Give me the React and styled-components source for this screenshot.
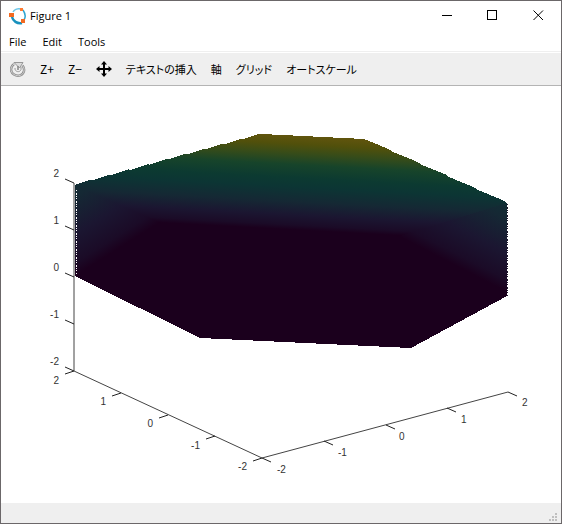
import styled, { createGlobalStyle } from 'styled-components'

const MENUS = ['File', 'Edit', 'Tools']
const TOOLS = ['テキストの挿入', '軸', 'グリッド', 'オートスケール']

// each axis: line, label alignment and its ticks
const AXES = [
	{
		id: 'z',
		line: [73, 97, 73, 285],
		anchor: 'end',
		ticks: [
			{ label: '2', x: 73, y: 97, dx: -9, dy: -4, tx: 58, ty: 91 },
			{ label: '1', x: 73, y: 144, dx: -9, dy: -4, tx: 58, ty: 138 },
			{ label: '0', x: 73, y: 191, dx: -9, dy: -4, tx: 58, ty: 185 },
			{ label: '-1', x: 73, y: 238, dx: -9, dy: -4, tx: 58, ty: 232 },
			{ label: '-2', x: 73, y: 285, dx: -9, dy: -4, tx: 58, ty: 279 },
		],
	},
	{
		id: 'y',
		line: [73, 285, 261, 372],
		anchor: 'end',
		ticks: [
			{ label: '2', x: 73, y: 285, dx: -9, dy: 3, tx: 58, ty: 298 },
			{ label: '1', x: 120, y: 307, dx: -9, dy: 3, tx: 105, ty: 319 },
			{ label: '0', x: 167, y: 329, dx: -9, dy: 3, tx: 152, ty: 341 },
			{ label: '-1', x: 214, y: 350, dx: -9, dy: 3, tx: 199, ty: 363 },
			{ label: '-2', x: 261, y: 372, dx: -9, dy: 3, tx: 246, ty: 384 },
		],
	},
	{
		id: 'x',
		line: [261, 372, 507, 306],
		anchor: 'start',
		ticks: [
			{ label: '-2', x: 261, y: 372, dx: 9, dy: 4, tx: 276, ty: 387 },
			{ label: '-1', x: 323, y: 355, dx: 9, dy: 4, tx: 337, ty: 370 },
			{ label: '0', x: 385, y: 339, dx: 9, dy: 4, tx: 398, ty: 354 },
			{ label: '1', x: 446, y: 322, dx: 9, dy: 4, tx: 460, ty: 337 },
			{ label: '2', x: 507, y: 306, dx: 9, dy: 4, tx: 521, ty: 320 },
		],
	},
]

// value -> colour, 0 is the flat bottom and 1 the top edge
const COLORMAP = [
	[0, '#1b001d'],
	[0.05, '#1b0b27'],
	[0.16, '#1b1631'],
	[0.3, '#152834'],
	[0.46, '#0c3534'],
	[0.56, '#0c3a31'],
	[0.7, '#17442a'],
	[0.82, '#374c19'],
	[0.92, '#51500b'],
	[1, '#5f540d'],
]

// edge with a small bump where two mesh cells meet
const bumpyEdge = (x1, y1, x2, y2, cells) => {
	const at = (t, lift) => `${x1 + (x2 - x1) * t},${y1 + (y2 - y1) * t - lift}`
	const points = [at(0, 0)]
	for (let i = 1; i <= cells; i++) {
		points.push(at((i - 0.15) / cells, 1), at(i / cells, 0))
	}
	return points.join(' ')
}

const OUTLINE = [
	bumpyEdge(74, 99, 261, 48, 10),
	bumpyEdge(363, 53, 506, 117, 5),
	'506,210 410,262 199,252 74,190',
].join(' ')

function Ramp({ id, from, to }) {
	return (
		<linearGradient
			id={id}
			gradientUnits="userSpaceOnUse"
			x1={from[0]}
			y1={from[1]}
			x2={to[0]}
			y2={to[1]}
		>
			{COLORMAP.map(([offset, color]) => (
				<stop key={offset} offset={offset} stopColor={color} />
			))}
		</linearGradient>
	)
}

function SurfacePlot() {
	return (
		<Plot viewBox="0 0 560 417" role="img" aria-label="Figure 1">
			<defs>
				<Ramp id="back" from={[261, 142]} to={[266, 49]} />
				<Ramp id="left" from={[74, 190]} to={[-44, 4]} />
				<Ramp id="right" from={[506, 206]} to={[605, 14]} />
			</defs>
			{AXES.map(({ id, line, anchor, ticks }) => (
				<g key={id}>
					<AxisLine x1={line[0]} y1={line[1]} x2={line[2]} y2={line[3]} />
					{ticks.map(({ label, x, y, dx, dy, tx, ty }) => (
						<g key={label}>
							<Tick x1={x} y1={y} x2={x + dx} y2={y + dy} />
							<TickLabel x={tx} y={ty} textAnchor={anchor}>
								{label}
							</TickLabel>
						</g>
					))}
				</g>
			))}
			<g shapeRendering="crispEdges">
				<polygon points={OUTLINE} fill="url(#back)" />
				<polygon points="74,99 159,137 74,190" fill="url(#left)" />
				<polygon points="506,117 399,150 506,206" fill="url(#right)" />
				<Fringe x1="75" y1="104" x2="75" y2="188" stroke="#fff" />
				<Fringe x1="506" y1="118" x2="506" y2="210" stroke="#1b1428" />
			</g>
		</Plot>
	)
}

function OctaveLogo() {
	return (
		<svg width="18" height="18" viewBox="0 0 18 18" fill="none">
			<path d="M4 5C5 3 8 1 12 2" stroke="#6cc6e8" strokeWidth="1.5" />
			<path d="M14 3c2 3 3 7 1 10" stroke="#2fa4cf" strokeWidth="1.5" />
			<path d="M3 10c1 4 5 7 10 6" stroke="#1991bd" strokeWidth="2.5" />
			<path d="M0 6h5v4H0z" fill="#f26a21" />
			<path d="M11 1h3v3h-3z" fill="#ff7a30" />
			<path d="M12 12h4v4h-4z" fill="#f26a21" />
		</svg>
	)
}

function RotateIcon() {
	return (
		<svg width="16" height="16" viewBox="0 0 16 16" fill="none">
			<path
				d="M4 3C0 6 0 11 4 13.500s9 1 10-3.500c.4-2-.3-4-1.500-5.500"
				stroke="#8f8f8f"
				strokeWidth="2.5"
			/>
			<path
				d="M4 3C0 6 0 11 4 13.500s9 1 10-3.500c.4-2-.3-4-1.500-5.500"
				stroke="#cfcfcf"
			/>
			<path d="M5 7c-.5 4 5 5 6 1.500V6" stroke="#989898" />
			<path d="M4 1.500h9L9.500 7z" fill="#dcdcdc" stroke="#979797" />
			<path d="M8 5v4" stroke="#858585" strokeWidth="1.5" />
		</svg>
	)
}

function PanIcon() {
	return (
		<svg width="16" height="16" viewBox="0 0 16 16">
			<path
				d="M8 0l3 3.500H9V7h3.500V5L16 8l-3.500 3V9H9v3.500h2L8 16l-3-3.500h2V9H3.500v2L0 8l3.500-3v2H7V3.500H5z"
				fill="#000"
			/>
		</svg>
	)
}

function App() {
	return (
		<>
			<GlobalStyle />
			<Window>
				<TitleBar>
					<OctaveLogo />
					<Title>Figure 1</Title>
					<Caption aria-label="Minimize">
						<svg width="11" height="11" shapeRendering="crispEdges">
							<path d="M1 5.500h10" stroke="#000" />
						</svg>
					</Caption>
					<Caption aria-label="Maximize">
						<svg width="11" height="11" shapeRendering="crispEdges">
							<path d="M.5.5h9v9h-9z" stroke="#000" fill="none" />
						</svg>
					</Caption>
					<Caption aria-label="Close">
						<svg width="11" height="11">
							<path d="M.5.5l9.500 9.500M10 .5L.5 10" stroke="#000" />
						</svg>
					</Caption>
				</TitleBar>
				<MenuBar>
					{MENUS.map(menu => (
						<MenuItem key={menu}>{menu}</MenuItem>
					))}
				</MenuBar>
				<ToolBar>
					<ToolButton aria-label="Rotate">
						<RotateIcon />
					</ToolButton>
					<ToolButton $zoom>Z+</ToolButton>
					<ToolButton $zoom>Z−</ToolButton>
					<ToolButton aria-label="Pan">
						<PanIcon />
					</ToolButton>
					{TOOLS.map(tool => (
						<ToolButton key={tool}>{tool}</ToolButton>
					))}
				</ToolBar>
				<Canvas>
					<SurfacePlot />
				</Canvas>
				<StatusBar>
					<svg width="8" height="8" fill="#bfbfbf" shapeRendering="crispEdges">
						<path d="M6 0h2v2H6zM3 3h2v2H3zM6 3h2v2H6zM0 6h2v2H0zM3 6h2v2H3zM6 6h2v2H6z" />
					</svg>
				</StatusBar>
			</Window>
		</>
	)
}

export default App

const GlobalStyle = createGlobalStyle`
	* {
		box-sizing: border-box;
	}
	body {
		margin: 0;
		background: #fff;
	}
	button {
		padding: 0;
		border: 0;
		background: none;
		color: #000;
		white-space: nowrap;
	}
	svg {
		display: block;
		flex-shrink: 0;
	}
`

const Window = styled.div`
	display: flex;
	flex-direction: column;
	min-height: 100vh;
	border: 1px solid #6b6769;
	background: #fff;
	font-family: 'Open Sans', 'Noto Sans', sans-serif;
	font-size: 11px;
`
const TitleBar = styled.header`
	display: flex;
	align-items: center;
	height: 29px;
	padding-left: 8px;
`
const Title = styled.span`
	flex: 1;
	margin-left: 3px;
`
const Caption = styled.button`
	display: flex;
	align-items: center;
	justify-content: center;
	width: 46px;
	height: 100%;
`
const MenuBar = styled.nav`
	display: flex;
	align-items: center;
	gap: 16px;
	height: 22px;
	padding: 2px 0 0 8px;
	border-bottom: 1px solid #efefef;
`
const MenuItem = styled.button`
	font-family: inherit;
	font-size: 11px;
	line-height: 18px;
`
const ToolBar = styled.div`
	display: flex;
	align-items: center;
	gap: 14px;
	height: 33px;
	margin-top: 1px;
	padding-left: 9px;
	border-bottom: 1px solid #b4b4b4;
	background: #efefef;
`
const ToolButton = styled.button`
	font-family: 'Noto Sans CJK JP', sans-serif;
	font-size: ${({ $zoom }) => ($zoom ? '12px' : '11px')};
	font-feature-settings: 'palt';
	line-height: 16px;
`
const Canvas = styled.main`
	flex: 1;
	background: #fff;
`
const Plot = styled.svg`
	width: 100%;
	height: auto;
`
const AxisLine = styled.line`
	stroke: #444;
	stroke-width: 1;
`
const Tick = styled.line`
	stroke: #222;
	stroke-width: 1;
`
const TickLabel = styled.text`
	fill: #333;
	font-family: 'Liberation Sans', Arial, sans-serif;
	font-size: 10px;
`
const Fringe = styled.line`
	stroke-width: 1;
	stroke-dasharray: 1 2 2 1 1 1;
`
const StatusBar = styled.footer`
	display: flex;
	align-items: flex-end;
	justify-content: flex-end;
	height: 20px;
	padding: 0 4px 2px 0;
	background: #efefef;
`
